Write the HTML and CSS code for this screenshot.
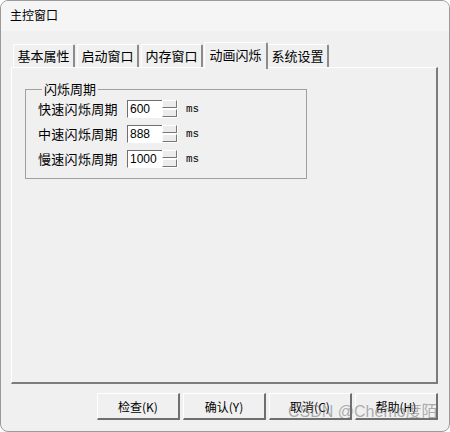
FILE: index.html
```html
<!DOCTYPE html>
<html lang="zh-CN">
<head>
  <meta charset="UTF-8">
  <title>主控窗口</title>
  <link rel="stylesheet" href="styles.css">
</head>
<body>
  <div class="window">
    <!-- 标题栏 -->
    <div class="titlebar">主控窗口</div>

    <div class="client">
      <!-- 选项卡 -->
      <div class="tabs">
        <div class="tab">基本属性</div>
        <div class="tab">启动窗口</div>
        <div class="tab">内存窗口</div>
        <div class="tab active">动画闪烁</div>
        <div class="tab">系统设置</div>
      </div>

      <div class="panel">
        <fieldset class="group">
          <legend>闪烁周期</legend>
          <div class="row">
            <span class="label">快速闪烁周期</span>
            <span class="edit">600</span>
            <span class="spin"><i></i><i></i></span>
            <span class="unit">ms</span>
          </div>
          <div class="row">
            <span class="label">中速闪烁周期</span>
            <span class="edit">888</span>
            <span class="spin"><i></i><i></i></span>
            <span class="unit">ms</span>
          </div>
          <div class="row">
            <span class="label">慢速闪烁周期</span>
            <span class="edit">1000</span>
            <span class="spin"><i></i><i></i></span>
            <span class="unit">ms</span>
          </div>
        </fieldset>
      </div>

      <!-- 按钮 -->
      <div class="buttons">
        <button class="btn">检查(K)</button>
        <button class="btn">确认(Y)</button>
        <button class="btn">取消(C)</button>
        <button class="btn">帮助(H)</button>
      </div>
    </div>

    <div class="watermark">CSDN @Chemo度陌</div>
  </div>
</body>
</html>
```

FILE: styles.css
```css
body {
  margin: 0;
  padding: 0;
  background-color: #fff;
  font-family: "Noto Sans CJK SC", "Liberation Sans", sans-serif;
  font-size: 13px;
  color: #000;
}
.window {
  position: relative;
  width: 450px;
  height: 432px;
  box-sizing: border-box;
  border: 1px solid #9a9a9a;
  border-radius: 8px;
  background-color: #f0f0f0;
  overflow: hidden;
}
.titlebar {
  height: 30px;
  line-height: 28px;
  padding-left: 9px;
  font-size: 12px;
  background-color: #f5f5f5;
}
.client {
  padding: 8px 11px 0 10px;
}
.tabs {
  display: flex;
  align-items: flex-end;
  height: 28px;
  padding-left: 2px;
}
.tab {
  width: 59px;
  height: 22px;
  line-height: 21px;
  text-align: center;
  margin-right: 2px;
  border-top: 1px solid #fff;
  border-left: 1px solid #fff;
  border-right: 2px solid #8c8c8c;
  border-radius: 2px 2px 0 0;
  background-color: #f0f0f0;
}
.tab.active {
  position: relative;
  z-index: 1;
  width: 61px;
  height: 26px;
  line-height: 24px;
  margin: 0 0 -2px -1px;
}
.tab.active + .tab {
  margin-left: -1px;
}
.panel {
  height: 300px;
  border-top: 1px solid #fff;
  border-left: 1px solid #fff;
  border-right: 2px solid #7c7c7c;
  border-bottom: 2px solid #7c7c7c;
  padding: 14px 0 0 13px;
}
.group {
  width: 268px;
  margin: 0;
  padding: 0 0 7px 12px;
  border: 1px solid #a0a0a0;
}
.group legend {
  padding: 0 2px;
  margin-left: 4px;
  font-size: 13px;
  line-height: 14px;
}
.row {
  display: flex;
  align-items: center;
  height: 25px;
}
.label {
  width: 89px;
  letter-spacing: 0.3px;
}
.edit {
  width: 32px;
  height: 16px;
  line-height: 16px;
  padding-left: 2px;
  font-family: "Liberation Sans", sans-serif;
  font-size: 12px;
  background-color: #fff;
  border-top: 1px solid #6f6f6f;
  border-left: 1px solid #6f6f6f;
  border-bottom: 1px solid #fff;
}
.spin {
  display: flex;
  flex-direction: column;
  width: 16px;
  height: 18px;
  background-color: #fff;
}
.spin i {
  flex: 1;
  margin: 0 1px 1px 0;
  background-color: #ececec;
  border-top: 1px solid #fff;
  border-left: 1px solid #fff;
  border-right: 1px solid #777;
  border-bottom: 1px solid #777;
}
.unit {
  margin-left: 8px;
  font-family: "Liberation Mono", monospace;
  font-size: 11px;
}
.buttons {
  display: flex;
  justify-content: flex-end;
  gap: 3px;
  margin-top: 9px;
}
.btn {
  width: 83px;
  height: 27px;
  margin: 0;
  padding: 0;
  font-family: "Noto Sans CJK SC", "Liberation Mono", monospace;
  font-size: 12px;
  color: #000;
  background-color: #f0f0f0;
  border-top: 1px solid #fff;
  border-left: 1px solid #fff;
  border-right: 2px solid #6f6f6f;
  border-bottom: 2px solid #6f6f6f;
  border-radius: 0;
}
.watermark {
  position: absolute;
  left: 287px;
  top: 397px;
  font-family: "Liberation Sans", "Noto Sans CJK SC", sans-serif;
  font-size: 16px;
  color: rgba(110, 110, 110, 0.55);
  pointer-events: none;
}
```
